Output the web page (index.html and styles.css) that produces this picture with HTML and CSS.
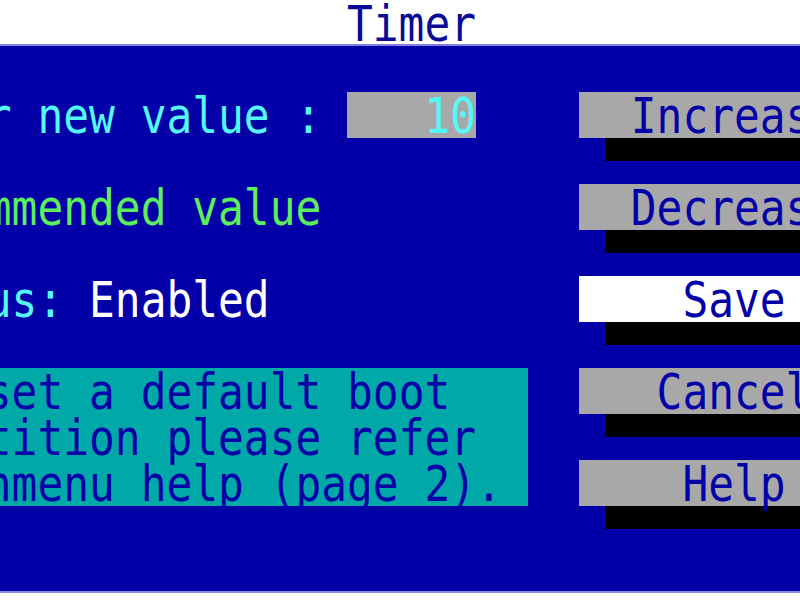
FILE: index.html
```html
<!DOCTYPE html>
<html>
<head>
<meta charset="utf-8">
<title>Timer</title>
<link rel="stylesheet" href="styles.css">
</head>
<body>
<div class="screen">
  <header class="titlebar"><span class="g title">Timer</span></header>
  <main class="panel">
    <div class="grid">
      <div class="left">
        <div class="row"><span class="g cyan">r new value : </span><span class="input"><span class="g cyan">10</span></span></div>
        <div class="row"></div>
        <div class="row"><span class="g green">mmended value</span></div>
        <div class="row"></div>
        <div class="row"><span class="g cyan">us: </span><span class="g white">Enabled</span></div>
        <div class="row"></div>
        <div class="help">
          <div class="row"><span class="g">set a default boot</span></div>
          <div class="row"><span class="g">tition please refer</span></div>
          <div class="row"><span class="g">nmenu help (page 2).</span></div>
        </div>
      </div>
      <div class="buttons">
        <div class="btn"><div class="face"><span class="g">Increase</span></div><div class="shadow"></div></div>
        <div class="btn"><div class="face"><span class="g">Decrease</span></div><div class="shadow"></div></div>
        <div class="btn"><div class="face active"><span class="g">Save</span></div><div class="shadow"></div></div>
        <div class="btn"><div class="face"><span class="g">Cancel</span></div><div class="shadow"></div></div>
        <div class="btn"><div class="face"><span class="g">Help</span></div><div class="shadow"></div></div>
      </div>
    </div>
  </main>
</div>
</body>
</html>
```
FILE: styles.css
```css
html, body {
  margin: 0;
  padding: 0;
  background: #ffffff;
  overflow: hidden;
}

.screen {
  width: 800px;
  height: 600px;
  overflow: hidden;
  font-family: "DejaVu Sans Mono", "Liberation Mono", monospace;
  font-size: 42.86px;
  letter-spacing: 0;
}

.g {
  display: inline-block;
  white-space: pre;
  transform: translateY(1px) scaleY(1.15);
}

.titlebar {
  height: 44px;
  line-height: 44px;
  background: #ffffff;
  border-bottom: 2px solid #8080e0;
  padding-left: 347px;
  color: #0a0a96;
}

.title {
  transform: translateY(2px) scaleY(1.15);
}

.panel {
  box-sizing: border-box;
  height: 547px;
  padding-top: 46px;
  background: #0400a8;
  border-bottom: 2px solid #8a8ae8;
  overflow: hidden;
}

.grid {
  display: flex;
  align-items: flex-start;
  margin-left: -14.2px;
  width: 1000px;
}

.left {
  width: 541.8px;
  flex: none;
}

.row {
  height: 46px;
  line-height: 46px;
  display: flex;
}

.cyan { color: #55f8f8; }
.green { color: #5cf05c; }
.white { color: #ffffff; }

.input {
  width: 129px;
  height: 46px;
  background: #a8a8a8;
  display: flex;
  justify-content: flex-end;
}

.help {
  background: #00a8a8;
  color: #0400a8;
}

.buttons {
  margin-left: 51.6px;
  display: flex;
  flex-direction: column;
  gap: 23px;
  flex: none;
}

.btn {
  display: flex;
  flex-direction: column;
}

.face {
  width: 309.6px;
  height: 46px;
  line-height: 46px;
  background: #a8a8a8;
  color: #0400a8;
  text-align: center;
}

.face.active {
  background: #ffffff;
}

.shadow {
  margin-left: 25.8px;
  width: 309.6px;
  height: 23px;
  background: #000000;
}
```
